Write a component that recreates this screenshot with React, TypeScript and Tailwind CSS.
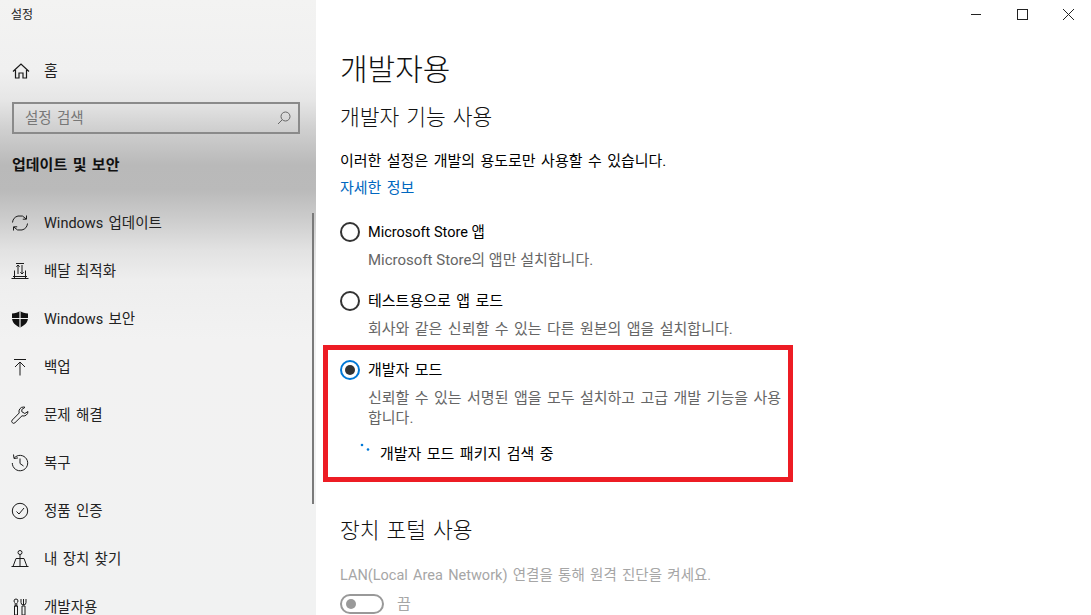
import { ReactNode } from 'react';

const font = '[font-family:Roboto,"Noto_Sans_CJK_KR",sans-serif]';

const iconProps = {
  width: 18,
  height: 18,
  viewBox: '0 0 18 18',
  fill: 'none',
  stroke: '#1a1a1a',
  strokeWidth: 1,
};

const icons: Record<string, ReactNode> = {
  home: (
    <svg {...iconProps} strokeWidth={1.2}>
      <path d="M1 9.500 9 2l8 7.500M3.500 8v8h3.500v-5h4v5h3.500V8" />
    </svg>
  ),
  update: (
    <svg {...iconProps}>
      <path d="M1.500 8.500A7.500 7.500 0 0 1 15 4.800M16.500 9.500A7.500 7.500 0 0 1 3 13.200" />
      <path d="M15.500 1.500v3.700h-3.700M2.500 16.500v-3.700h3.700" />
    </svg>
  ),
  delivery: (
    <svg {...iconProps}>
      <path d="M.5 16.500h17M3.500 8.500v8M14.500 8.500v8M2 14.500h14" />
      <path d="M5 1.500h8M7 3v9M5.300 4.700 7 3l1.700 1.700M11 3v9M9.300 10.300 11 12l1.700-1.700" />
    </svg>
  ),
  shield: (
    <svg width={18} height={18} viewBox="0 0 18 18" fill="#111">
      <path d="M1 3.500C4 3.500 7 2.500 9 1c2 1.500 5 2.500 8 2.500V8c0 4.500-3.500 7.500-8 9.500C4.500 15.500 1 12.500 1 8Z" />
      <path d="M9 1v16.500M1 8.500h16" stroke="#f0f0f0" strokeWidth={1.2} />
    </svg>
  ),
  backup: (
    <svg {...iconProps}>
      <path d="M3 1.500h12M9 17.500V4M4 9l5-5 5 5" />
    </svg>
  ),
  wrench: (
    <svg {...iconProps}>
      <path d="M12.500 1a4.500 4.500 0 0 0-4.300 6L1.300 14a1.900 1.900 0 0 0 2.700 2.700L11 9.800A4.500 4.500 0 0 0 17 5.500l-3.200 2-3-1.800V3.500L14 1.300a4.500 4.500 0 0 0-1.500-.3Z" />
    </svg>
  ),
  recovery: (
    <svg {...iconProps}>
      <path d="M3.200 4A7.700 7.700 0 1 1 1.300 9M2.500 .5 3 4.500l4-.6M9 4.500v5l3.500 2.500" />
    </svg>
  ),
  activation: (
    <svg {...iconProps}>
      <circle cx={9} cy={9} r={7.700} />
      <path d="m5.500 9.500 2.500 2.500 5-6" />
    </svg>
  ),
  find: (
    <svg {...iconProps}>
      <circle cx={9} cy={2.500} r={2} />
      <path d="M9 4.500v12M5 8.500h8M5 8.500 2 16.500h14l-3-8M.5 16.500h17" />
    </svg>
  ),
  dev: (
    <svg {...iconProps}>
      <path d="M5 1a2 2 0 0 0-2 2c0 1 .7 1.700 1.200 2v3h1.600V5C6.300 4.700 7 4 7 3a2 2 0 0 0-2-2Z" />
      <path d="M3.500 8h3v9h-3zM10 1v3.500a2.500 2.500 0 0 0 5 0V1M12.500 1v6M11 8h3v9h-3z" />
    </svg>
  ),
};

const navItems = [
  { icon: 'update', label: 'Windows 업데이트' },
  { icon: 'delivery', label: '배달 최적화' },
  { icon: 'shield', label: 'Windows 보안' },
  { icon: 'backup', label: '백업' },
  { icon: 'wrench', label: '문제 해결' },
  { icon: 'recovery', label: '복구' },
  { icon: 'activation', label: '정품 인증' },
  { icon: 'find', label: '내 장치 찾기' },
  { icon: 'dev', label: '개발자용' },
];

function Radio({ checked }: { checked?: boolean }) {
  return checked ? (
    <span className="flex h-5 w-5 shrink-0 items-center justify-center rounded-full border-2 border-[#0078d7] bg-white">
      <span className="h-[10px] w-[10px] rounded-full bg-[#333]" />
    </span>
  ) : (
    <span className="h-5 w-5 shrink-0 rounded-full border-2 border-[#333]" />
  );
}

export default function App() {
  return (
    <div className={`relative flex h-[615px] w-[1091px] overflow-hidden bg-white text-[15px] text-black [word-spacing:1.7px] ${font}`}>
      {/* Sidebar */}
      <aside className="relative h-full w-[316px] shrink-0 bg-[linear-gradient(180deg,#f3f3f2_0px,#f0f0f0_70px,#e6e6e6_100px,#cfcfcf_130px,#b9b9b9_165px,#bababa_190px,#cdcdcd_220px,#e2e2e2_250px,#eeeeee_280px,#f2f2f2_340px,#f1f2f2_615px)]">
        <div className="flex h-[30px] items-center pl-[11px] text-[12px] text-[#222]">설정</div>
        <div className="mt-[17px] flex h-[48px] items-center">
          <span className="flex w-[44px] justify-center pr-[3px]">{icons.home}</span>
          <span className="text-[#222]">홈</span>
        </div>
        <div className="ml-[12px] mt-[7px] flex h-[32px] w-[288px] items-center justify-between border-2 border-[#8a8a8a] pl-[11px] pr-[7px] text-[14.5px] text-[#777]">
          <span className="pt-[1px]">설정 검색</span>
          <svg width={14} height={14} viewBox="0 0 14 14" fill="none" stroke="#666" strokeWidth={1}>
            <circle cx={8.500} cy={5.500} r={4.500} />
            <path d="M5.300 8.700 1 13" />
          </svg>
        </div>
        <div className="mt-[17px] pl-[12px] font-bold leading-[28px] text-[#111]">업데이트 및 보안</div>
        <nav className="mt-[20px] text-[14.5px]">
          {navItems.map((item) => (
            <div key={item.label} className="flex h-[48px] items-center text-[#222]">
              <span className="flex w-[44px] shrink-0 justify-center pr-[4px]">{icons[item.icon]}</span>
              <span className="pt-[1px]">{item.label}</span>
            </div>
          ))}
        </nav>
        {/* scrollbar thumb */}
        <div className="absolute left-[312px] top-[213px] h-[291px] w-[2px] bg-[#7a7a7a]" />
      </aside>

      {/* Main panel */}
      <main className="min-w-0 flex-1">
        <div className="flex h-[30px] justify-end">
          <svg width={46} height={30} viewBox="0 0 46 30" stroke="#222" fill="none">
            <path d="M18 14.500h10" />
          </svg>
          <svg width={46} height={30} viewBox="0 0 46 30" stroke="#222" fill="none">
            <rect x={18.500} y={9.500} width={10} height={10} />
          </svg>
          <svg width={46} height={30} viewBox="0 0 46 30" stroke="#222" fill="none">
            <path d="M18 9 29 20M29 9 18 20" />
          </svg>
        </div>

        <div className="pl-[24px]">
          <h1 className="mt-[18px] text-[30px] font-light leading-[44px] text-[#111]">개발자용</h1>
          <h2 className="mt-[12px] text-[21.5px] font-light leading-[28px] text-[#111]">개발자 기능 사용</h2>

          <p className="mt-[17px] leading-[24px]">이러한 설정은 개발의 용도로만 사용할 수 있습니다.</p>
          <p className="mt-[3px] leading-[24px] text-[#0067c0]">자세한 정보</p>

          <div className="mt-[20px] flex h-[24px] items-center gap-[8px]">
            <Radio />
            <span className="pt-[1px] text-[14.5px] [word-spacing:0px]">Microsoft Store 앱</span>
          </div>
          <p className="mt-[4px] pl-[28px] leading-[24px] text-[#666] [word-spacing:0px]">Microsoft Store의 앱만 설치합니다.</p>

          <div className="mt-[17px] flex h-[24px] items-center gap-[8px]">
            <Radio />
            <span>테스트용으로 앱 로드</span>
          </div>
          <p className="mt-[4px] pl-[28px] leading-[24px] text-[#666]">회사와 같은 신뢰할 수 있는 다른 원본의 앱을 설치합니다.</p>

          <div className="mt-[17px] flex h-[24px] items-center gap-[8px]">
            <Radio checked />
            <span>개발자 모드</span>
          </div>
          <p className="mt-[6px] w-[445px] pl-[28px] leading-[20px] text-[#666]">
            신뢰할 수 있는 서명된 앱을 모두 설치하고 고급 개발 기능을 사용합니다.
          </p>
          <div className="mt-[14px] flex h-[24px] items-center pl-[22px]">
            <svg width={12} height={16} viewBox="0 0 12 16" fill="#0078d7" className="-ml-[2px] -mt-[8px] mr-[8px]">
              <circle cx={2} cy={3} r={1.300} />
              <circle cx={8} cy={7.500} r={1.300} />
            </svg>
            <span>개발자 모드 패키지 검색 중</span>
          </div>

          <h2 className="mt-[51px] text-[21.5px] font-light leading-[28px] text-[#111]">장치 포털 사용</h2>
          <p className="mt-[19px] text-[14.5px] leading-[24px] text-[#a6a6a6]">LAN(Local Area Network) 연결을 통해 원격 진단을 켜세요.</p>
          <div className="mt-[5px] flex items-center gap-[13px]">
            <span className="flex h-[20px] w-[44px] items-center rounded-full border-2 border-[#999] pl-[4px]">
              <span className="h-[10px] w-[10px] rounded-full bg-[#999]" />
            </span>
            <span className="text-[#a6a6a6]">끔</span>
          </div>
        </div>
      </main>

      {/* red annotation box */}
      <div className="pointer-events-none absolute left-[323px] top-[345px] h-[137px] w-[470px] border-[5px] border-[#ed1c24]" />
    </div>
  );
}
